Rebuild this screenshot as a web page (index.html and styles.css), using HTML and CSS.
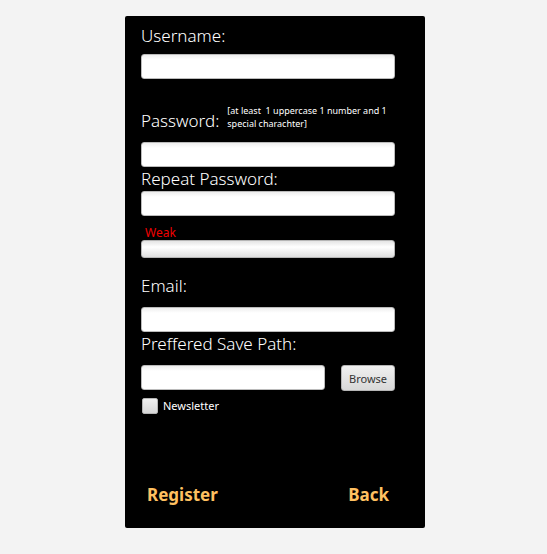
FILE: index.html
```
<!DOCTYPE html>
<html lang="en">
<head>
<meta charset="utf-8">
<meta name="viewport" content="width=device-width, initial-scale=1">
<title>Register</title>
<link rel="stylesheet" href="styles.css">
</head>
<body>
<form class="panel">
  <div class="group">
    <label class="label" for="username">Username:</label>
    <input class="field field-spaced" id="username" type="text">
  </div>
  <div class="group group-password">
    <div class="password-head">
      <label class="label" for="password">Password:</label>
      <p class="hint" id="hint">[at least&nbsp; 1 uppercase 1 number and 1 special charachter]</p>
    </div>
    <input class="field field-wide-gap" id="password" type="password" aria-describedby="hint">
  </div>
  <div class="group">
    <label class="label" for="repeat">Repeat Password:</label>
    <input class="field" id="repeat" type="password">
  </div>
  <div class="group group-strength">
    <label class="strength-label" for="strength">Weak</label>
    <progress class="strength" id="strength" max="100" value="0"></progress>
  </div>
  <div class="group group-email">
    <label class="label" for="email">Email:</label>
    <input class="field field-wide-gap" id="email" type="email">
  </div>
  <div class="group">
    <label class="label" for="path">Preffered Save Path:</label>
    <div class="path-row">
      <input class="field" id="path" type="text">
      <button class="browse" type="button">Browse</button>
    </div>
  </div>
  <label class="newsletter"><input class="check" type="checkbox">Newsletter</label>
  <div class="actions">
    <button class="action" type="submit">Register</button>
    <button class="action" type="button">Back</button>
  </div>
</form>
</body>
</html>
```
FILE: styles.css
```
* {
  box-sizing: border-box;
}

body {
  margin: 0;
  padding: 16px 15px 16px 18px;
  background: #f3f3f3;
  color: #fff;
  font-family: "Noto Sans", "Open Sans", sans-serif;
  font-size: 12px;
}

.panel {
  display: flex;
  flex-direction: column;
  max-width: 300px;
  margin: 0 auto;
  padding: 8px 30px 21px 16px;
  border-radius: 2px;
  background: #000;
}

.group {
  display: flex;
  flex-direction: column;
}

.label {
  font-size: 17px;
  font-weight: 300;
  line-height: 24px;
  white-space: nowrap;
}

.field {
  width: 100%;
  min-width: 0;
  height: 25px;
  padding: 0 6px;
  border: 1px solid #bbb;
  border-radius: 3px;
  background: linear-gradient(#eee, #fff 5px);
  font: inherit;
}

.field-spaced {
  margin-top: 6px;
}

.field-wide-gap {
  margin-top: 9px;
}

.group-password {
  margin-top: 25px;
}

.password-head {
  display: flex;
  align-items: flex-end;
  gap: 8px;
}

.hint {
  margin: 0;
  padding-bottom: 3px;
  font-size: 9px;
  line-height: 13px;
}

.group-strength {
  margin-top: 9px;
}

.strength-label {
  padding-left: 4px;
  color: #f00000;
  font-size: 12px;
  line-height: 15px;
}

.strength {
  appearance: none;
  width: 100%;
  height: 18px;
  border: 1px solid #b5b5b5;
  border-radius: 3px;
  background: linear-gradient(#e4e4e4, #fff 6px, #dedede);
}

.strength::-webkit-progress-bar {
  background: transparent;
}

.group-email {
  margin-top: 16px;
}

.path-row {
  display: flex;
  gap: 16px;
  margin-top: 9px;
}

.browse {
  flex: none;
  width: 54px;
  height: 26px;
  padding: 0;
  border: 1px solid #b5b5b5;
  border-radius: 3px;
  background: linear-gradient(#f0f0f0, #d8d8d8);
  color: #333;
  font: inherit;
  font-size: 11px;
}

.newsletter {
  display: flex;
  align-items: center;
  gap: 5px;
  margin-top: 7px;
  font-size: 11px;
  line-height: 16px;
}

.check {
  appearance: none;
  width: 16px;
  height: 16px;
  margin: 0 0 0 1px;
  border: 1px solid #b5b5b5;
  border-radius: 2px;
  background: linear-gradient(#f0f0f0, #d8d8d8);
}

.check:checked {
  background: #555;
}

.actions {
  display: flex;
  justify-content: space-between;
  margin-top: 69px;
  padding: 0 6px;
}

.action {
  padding: 0;
  border: 0;
  background: none;
  color: #ffc061;
  font: inherit;
  font-size: 17px;
  font-weight: 700;
  line-height: 24px;
}
```
